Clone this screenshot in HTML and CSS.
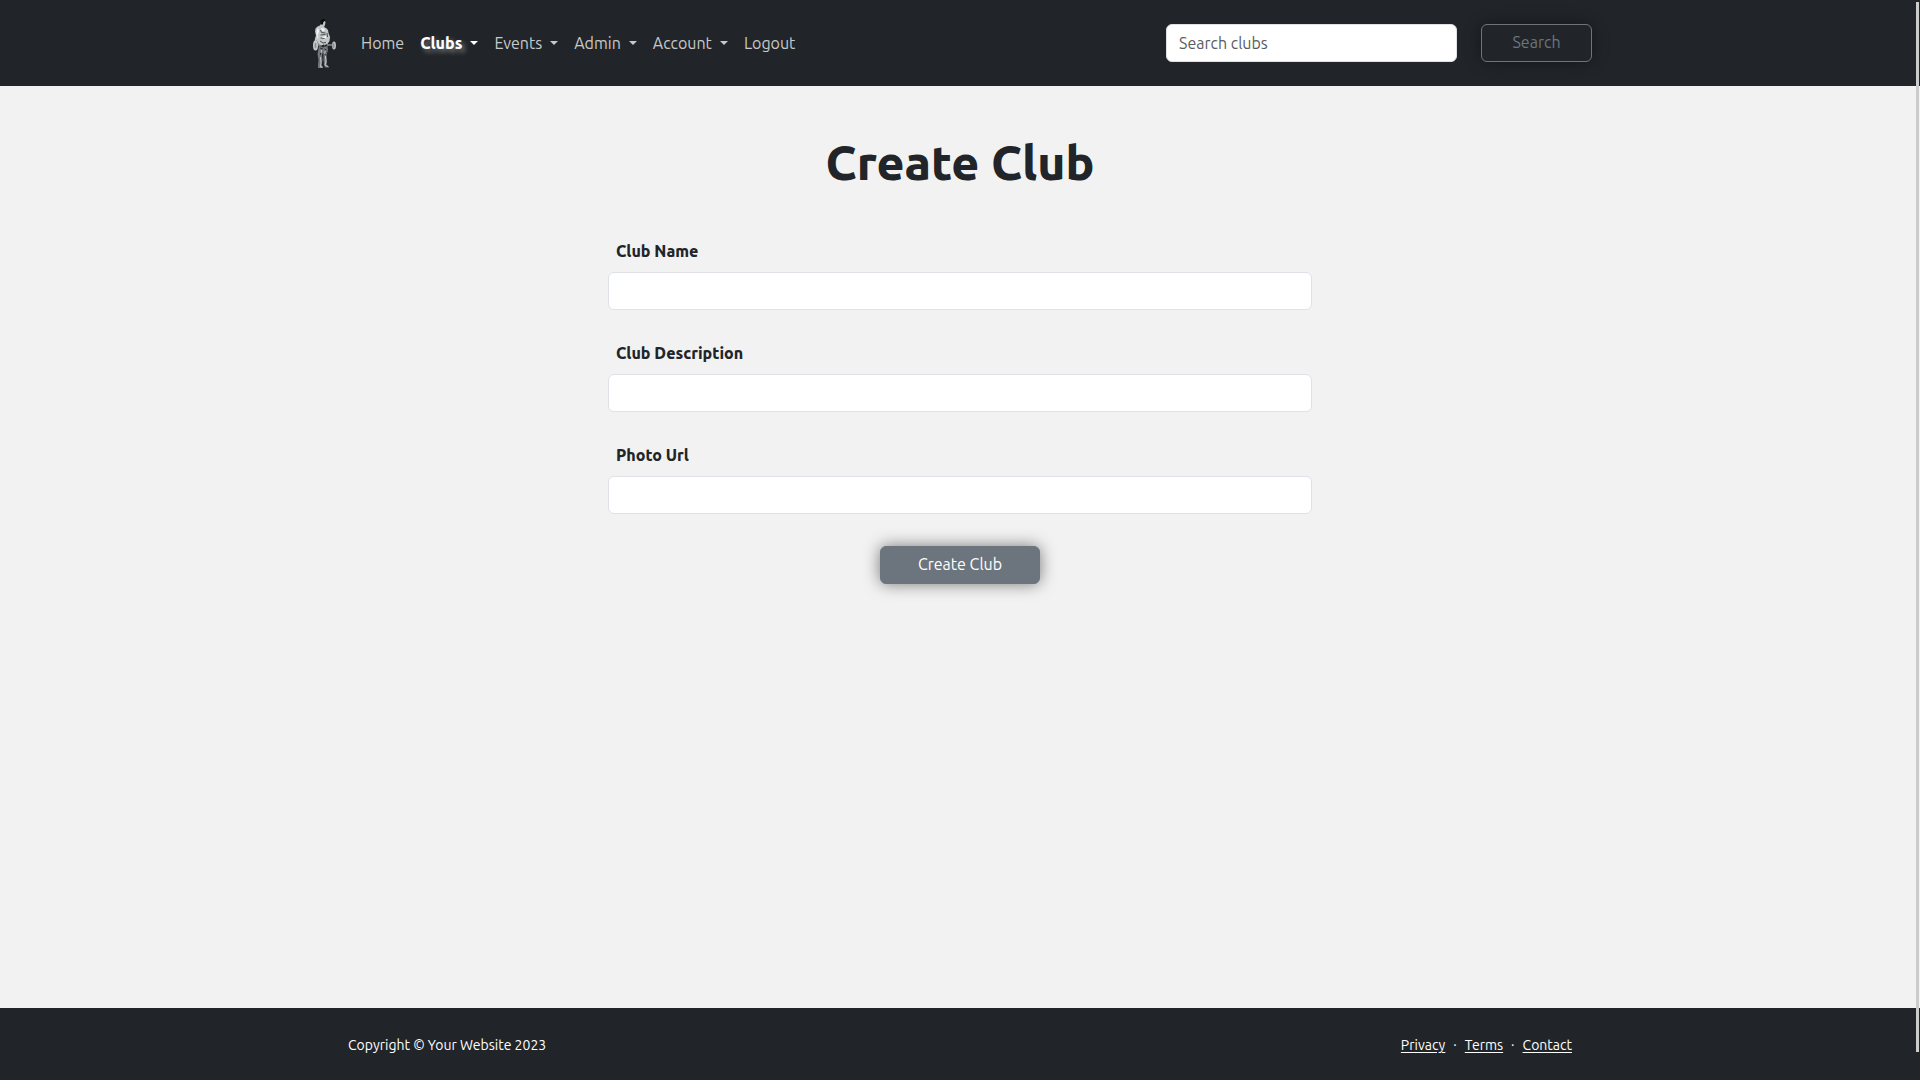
FILE: index.html
```html
<!DOCTYPE html>
<html lang="en">
<head>
<meta charset="utf-8">
<meta name="viewport" content="width=device-width, initial-scale=1">
<title>Create Club</title>
<link rel="stylesheet" href="styles.css">
</head>
<body>
<header class="navbar">
  <div class="container navbar-inner">
    <a class="brand" href="#" aria-label="Home page">
      <svg class="logo" viewBox="12 8 26 50" aria-hidden="true">
        <path fill="#c4c6c8" d="M21.500 13l3-2 1 1-.5 3-1 2 2 1 2 2 .5 3 1.500 4-.5 4-2 3-3 1h-4l-2-1-2-4v2l-1 4-1-.5v-3l.5-4 1-3-1-4 .5-3 2-2 2.500-1z"/>
        <path fill="#0b0c0e" d="M20.500 10.500l2-1.500h2l1 1.500-2 1-.5 2.500-1 1-1.500-1.500z"/>
        <path fill="#f5f5f5" d="M17 19l1.500-.5.5 3-1.500 4 1 3-1.500-1-.5-4zM21 18l3 .5 1 2-3 .5zM22 27l4-1v2l-4 1z"/>
        <path fill="none" stroke="#484c50" d="M20.500 20l1 2.500 4 .5M20.500 25l5-.5M20.500 28l4 .5M20 31l3 2 3-.5M23.500 34.500l1.500 1.500M27 23l.5 4"/>
        <path fill="#74787c" d="M19 36l4 1 4.500-1 .5 4-1.500 5 .5 7-.5 3 2.500 1.500v1h-4l-1-2.500-.5-5v-5l-.5-3-1 3 .5 5-1 5 1.500 2v1h-5v-3l.5-5-1-6z"/>
        <path fill="none" stroke="#303438" d="M20 38l2 1 1-1.500M24.500 39l2 1M20.500 42v3M26 42l-1 3"/>
        <path fill="none" stroke="#c8cacc" d="M20.500 47l.5 6-.5 4h2M25.500 46l.5 6-1 3 3 1.500M21.500 40l-.5 3M25 41v3"/>
        <path stroke="#c5c7c9" d="M17 35h5M27 35h5"/>
        <ellipse cx="15.500" cy="35.500" rx="2.500" ry="5" fill="#c9cbcd"/>
        <ellipse cx="15.500" cy="35.500" rx="1" ry="3" fill="#8d9194"/>
        <ellipse cx="34" cy="35.500" rx="2" ry="4" fill="#bcbfc1"/>
        <ellipse cx="33.500" cy="35.500" rx="1" ry="2.500" fill="#8d9194"/>
      </svg>
    </a>
    <nav class="nav" aria-label="Main">
      <a class="nav-link" href="#">Home</a>
      <a class="nav-link active dropdown" href="#">Clubs</a>
      <a class="nav-link dropdown" href="#">Events</a>
      <a class="nav-link dropdown" href="#">Admin</a>
      <a class="nav-link dropdown" href="#">Account</a>
      <a class="nav-link" href="#">Logout</a>
    </nav>
    <form class="search" role="search">
      <input class="control search-control" type="search" placeholder="Search clubs" aria-label="Search clubs">
      <button class="btn btn-outline" type="submit">Search</button>
    </form>
  </div>
</header>
<main class="page">
  <h1 class="title">Create Club</h1>
  <form class="club-form">
    <div class="field">
      <label class="label" for="name">Club Name</label>
      <input class="control" id="name" type="text">
    </div>
    <div class="field">
      <label class="label" for="description">Club Description</label>
      <input class="control" id="description" type="text">
    </div>
    <div class="field">
      <label class="label" for="photo">Photo Url</label>
      <input class="control" id="photo" type="text">
    </div>
    <button class="btn btn-primary" type="submit">Create Club</button>
  </form>
</main>
<footer class="footer">
  <div class="container footer-inner">
    <span>Copyright © Your Website 2023</span>
    <div class="footer-links">
      <a href="#">Privacy</a><span>·</span><a href="#">Terms</a><span>·</span><a href="#">Contact</a>
    </div>
  </div>
</footer>
<div class="scroll-thumb" aria-hidden="true"></div>
</body>
</html>
```
FILE: styles.css
```css
* {
  box-sizing: border-box;
}

body {
  margin: 0;
  min-height: 100vh;
  display: flex;
  flex-direction: column;
  background: #f2f2f2;
  color: #212529;
  font: 16px/24px Ubuntu, "Noto Sans", sans-serif;
}

.container {
  width: 100%;
  max-width: 1320px;
  margin: 0 auto;
}

.navbar {
  background: #212529;
}

.navbar-inner {
  display: flex;
  align-items: center;
  min-height: 86px;
  padding: 8px 28px 8px 12px;
}

.brand {
  display: flex;
  margin-right: 15px;
}

.logo {
  width: 26px;
  height: 50px;
}

.nav {
  display: flex;
  flex: 1;
}

.nav-link {
  display: flex;
  align-items: center;
  gap: 8px;
  padding: 8px;
  color: #c8c9ca;
  text-decoration: none;
}

.nav-link.active {
  color: #fff;
  font-weight: 800;
  text-shadow: 3px 3px 5px rgba(255, 255, 255, 0.4);
}

.dropdown::after {
  content: "";
  border: 4px solid transparent;
  border-top-color: currentColor;
  border-bottom: 0;
}

.search {
  display: flex;
  gap: 24px;
}

.control {
  width: 100%;
  height: 38px;
  padding: 6px 12px;
  border: 1px solid #dee2e6;
  border-radius: 6px;
  background: #fff;
  color: #212529;
  font: inherit;
}

.control::placeholder {
  color: #595c5f;
  opacity: 1;
}

.search-control {
  width: 291px;
}

.btn {
  height: 38px;
  padding: 5px 12px 7px;
  border: 1px solid #6c757d;
  border-radius: 6px;
  font: inherit;
  cursor: pointer;
}

.btn-outline {
  width: 111px;
  background: transparent;
  color: #6c757d;
  box-shadow: 0 0 16px rgba(0, 0, 0, 0.4);
}

.btn-primary {
  width: 160px;
  align-self: center;
  background: #6c757d;
  color: #fff;
  box-shadow: 0 0 16px rgba(0, 0, 0, 0.5);
}

.page {
  flex: 1;
  padding: 48px 24px;
}

.title {
  margin: 0 0 48px;
  font-size: 48px;
  font-weight: 800;
  line-height: 57px;
  text-align: center;
}

.club-form {
  display: flex;
  flex-direction: column;
  gap: 32px;
  max-width: 704px;
  margin: 0 auto;
}

.field {
  display: flex;
  flex-direction: column;
  gap: 9px;
}

.field + .field {
  margin-top: -1px;
}

.label {
  padding: 0 8px;
  font-weight: 800;
}

.footer {
  background: #212529;
  color: #fff;
  font-size: 14px;
}

.footer-inner {
  display: flex;
  justify-content: space-between;
  padding: 25px 48px 23px;
}

.footer-links {
  display: flex;
  gap: 8px;
}

.footer-links a {
  color: inherit;
  text-underline-offset: 2px;
}

.scroll-thumb {
  position: fixed;
  top: 2px;
  right: 1px;
  bottom: 28px;
  width: 3px;
  background: #ccc;
}
```
